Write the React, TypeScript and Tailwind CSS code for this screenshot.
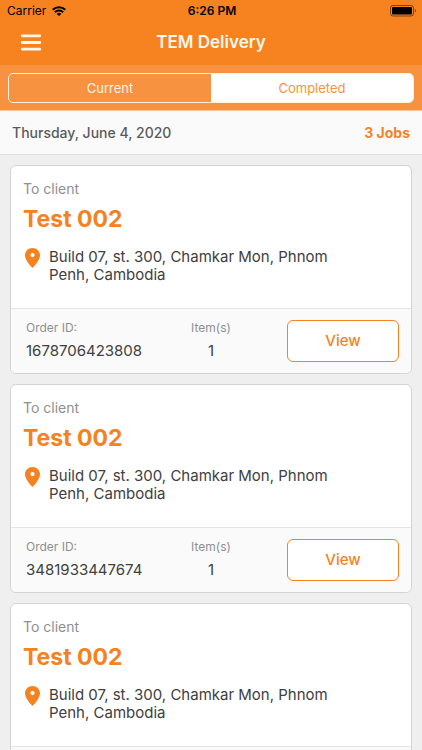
import { useState } from 'react'

interface Job {
  orderId: string
  client: string
  address: string
  items: number
}

const JOBS: Job[] = [
  { orderId: '1678706423808', client: 'Test 002', address: 'Build 07, st. 300, Chamkar Mon, Phnom Penh, Cambodia', items: 1 },
  { orderId: '3481933447674', client: 'Test 002', address: 'Build 07, st. 300, Chamkar Mon, Phnom Penh, Cambodia', items: 1 },
  { orderId: '5920417736281', client: 'Test 002', address: 'Build 07, st. 300, Chamkar Mon, Phnom Penh, Cambodia', items: 1 },
]

const TABS = ['Current', 'Completed']

function WifiIcon() {
  return (
    <svg viewBox="0 0 14 10" className="h-[10px] w-[14px]" fill="none" stroke="currentColor" strokeWidth="2" aria-hidden="true">
      <path d="M0.7 3.8a9 9 0 0 1 12.6 0" />
      <path d="M2.900 6.300a5.800 5.800 0 0 1 8.200 0" />
      <path d="M7 10 4.800 7.900a3.100 3.100 0 0 1 4.400 0z" fill="currentColor" stroke="none" />
    </svg>
  )
}

function BatteryIcon() {
  return (
    <svg viewBox="0 0 27 12" className="h-3 w-[27px]" aria-hidden="true">
      <rect x="0.5" y="0.5" width="23" height="10.5" rx="2.5" fill="none" stroke="currentColor" strokeOpacity="0.5" />
      <rect x="2" y="2" width="20" height="7.5" rx="1" fill="currentColor" />
      <path d="M24.8 4v3.6c.8-.3 1.200-1 1.200-1.800s-.4-1.500-1.200-1.800z" fill="currentColor" fillOpacity="0.5" />
    </svg>
  )
}

function MenuIcon() {
  return (
    <svg viewBox="0 0 22 17" className="h-[17px] w-[22px]" stroke="currentColor" strokeWidth="2.8" strokeLinecap="round" aria-hidden="true">
      <path d="M2.200 1.800h17.600M2.200 8.500h17.600M2.200 15.200h17.600" />
    </svg>
  )
}

function PinIcon() {
  return (
    <svg viewBox="0 0 15 20" className="h-5 w-[15px]" fill="currentColor" fillRule="evenodd" aria-hidden="true">
      <path d="M7.500 0C3.360 0 0 3.200 0 7.300 0 12 4.800 17.200 7.500 20 10.200 17.200 15 12 15 7.300 15 3.200 11.640 0 7.500 0zM7.500 5a2.100 2.100 0 1 1 0 4.200 2.100 2.100 0 0 1 0-4.200z" />
    </svg>
  )
}

function JobCard({ job }: { job: Job }) {
  return (
    <article className="overflow-hidden rounded-md border border-[#d3d3d6] bg-white">
      <div className="px-3 pt-[14px] pb-6">
        <p className="text-sm leading-[18px] text-[#8f8f8f]">To client</p>
        <h2 className="mt-[7px] text-[23px] leading-7 font-bold text-[#f58220]">{job.client}</h2>
        <div className="mt-[15px] flex gap-[9px] pl-[2px]">
          <span className="text-[#f58220]">
            <PinIcon />
          </span>
          <address className="max-w-[290px] text-[15px] leading-[18px] text-[#404040] not-italic">{job.address}</address>
        </div>
      </div>
      <div className="grid grid-cols-[1fr_auto_1fr] items-start border-t border-[#e4e4e6] bg-[#fafafa] px-3 py-[11px]">
        <div className="pl-[3px]">
          <p className="text-xs leading-4 text-[#8f8f8f]">Order ID:</p>
          <p className="mt-[5px] text-[15px] leading-5 text-[#404040]">{job.orderId}</p>
        </div>
        <div className="text-center">
          <p className="text-xs leading-4 text-[#8f8f8f]">Item(s)</p>
          <p className="mt-[5px] text-[15px] leading-5 text-[#404040]">{job.items}</p>
        </div>
        <button
          type="button"
          className="h-[42px] w-28 justify-self-end rounded-md border border-[#f58220] bg-white text-[15px] font-medium text-[#f58220]"
        >
          View
        </button>
      </div>
    </article>
  )
}

export default function App() {
  const [tab, setTab] = useState('Current')

  return (
    <div className="min-h-dvh bg-[#efefef] font-['Inter',sans-serif]">
      <header className="bg-[#f78320] pb-[2px]">
        <div className="grid h-[22px] grid-cols-3 items-center pr-[5px] pl-[7px] text-xs text-black">
          <div className="flex items-center gap-[6px]">
            <span>Carrier</span>
            <WifiIcon />
          </div>
          <span className="text-center font-semibold">6:26 PM</span>
          <div className="flex justify-end">
            <BatteryIcon />
          </div>
        </div>
        <div className="grid h-[41px] grid-cols-[1fr_auto_1fr] items-center px-5 text-[#fff8ec]">
          <button type="button" aria-label="Menu" className="justify-self-start">
            <MenuIcon />
          </button>
          <h1 className="text-[17px] font-semibold">TEM Delivery</h1>
        </div>
      </header>

      <div className="border-b border-[#f9c79c] bg-[#f79340] px-2 pt-2 pb-[7px]">
        <div className="grid h-[30px] grid-cols-2 overflow-hidden rounded-[5px] border border-[#fff3e0]">
          {TABS.map((t) => (
            <button
              key={t}
              type="button"
              onClick={() => setTab(t)}
              className={`pt-px text-[13px] ${tab === t ? 'text-[#fff3e0]' : 'bg-white text-[#f79340]'}`}
            >
              {t}
            </button>
          ))}
        </div>
      </div>

      <div className="flex h-11 items-center justify-between border-b border-[#e0e0e0] bg-[#fafafa] px-3 text-sm">
        <span className="font-medium text-[#5a5a5a]">Thursday, June 4, 2020</span>
        <span className="font-bold text-[#f08530]">{JOBS.length} Jobs</span>
      </div>

      <main className="flex flex-col gap-[10px] p-[10px]">
        {JOBS.map((job) => (
          <JobCard key={job.orderId} job={job} />
        ))}
      </main>
    </div>
  )
}
